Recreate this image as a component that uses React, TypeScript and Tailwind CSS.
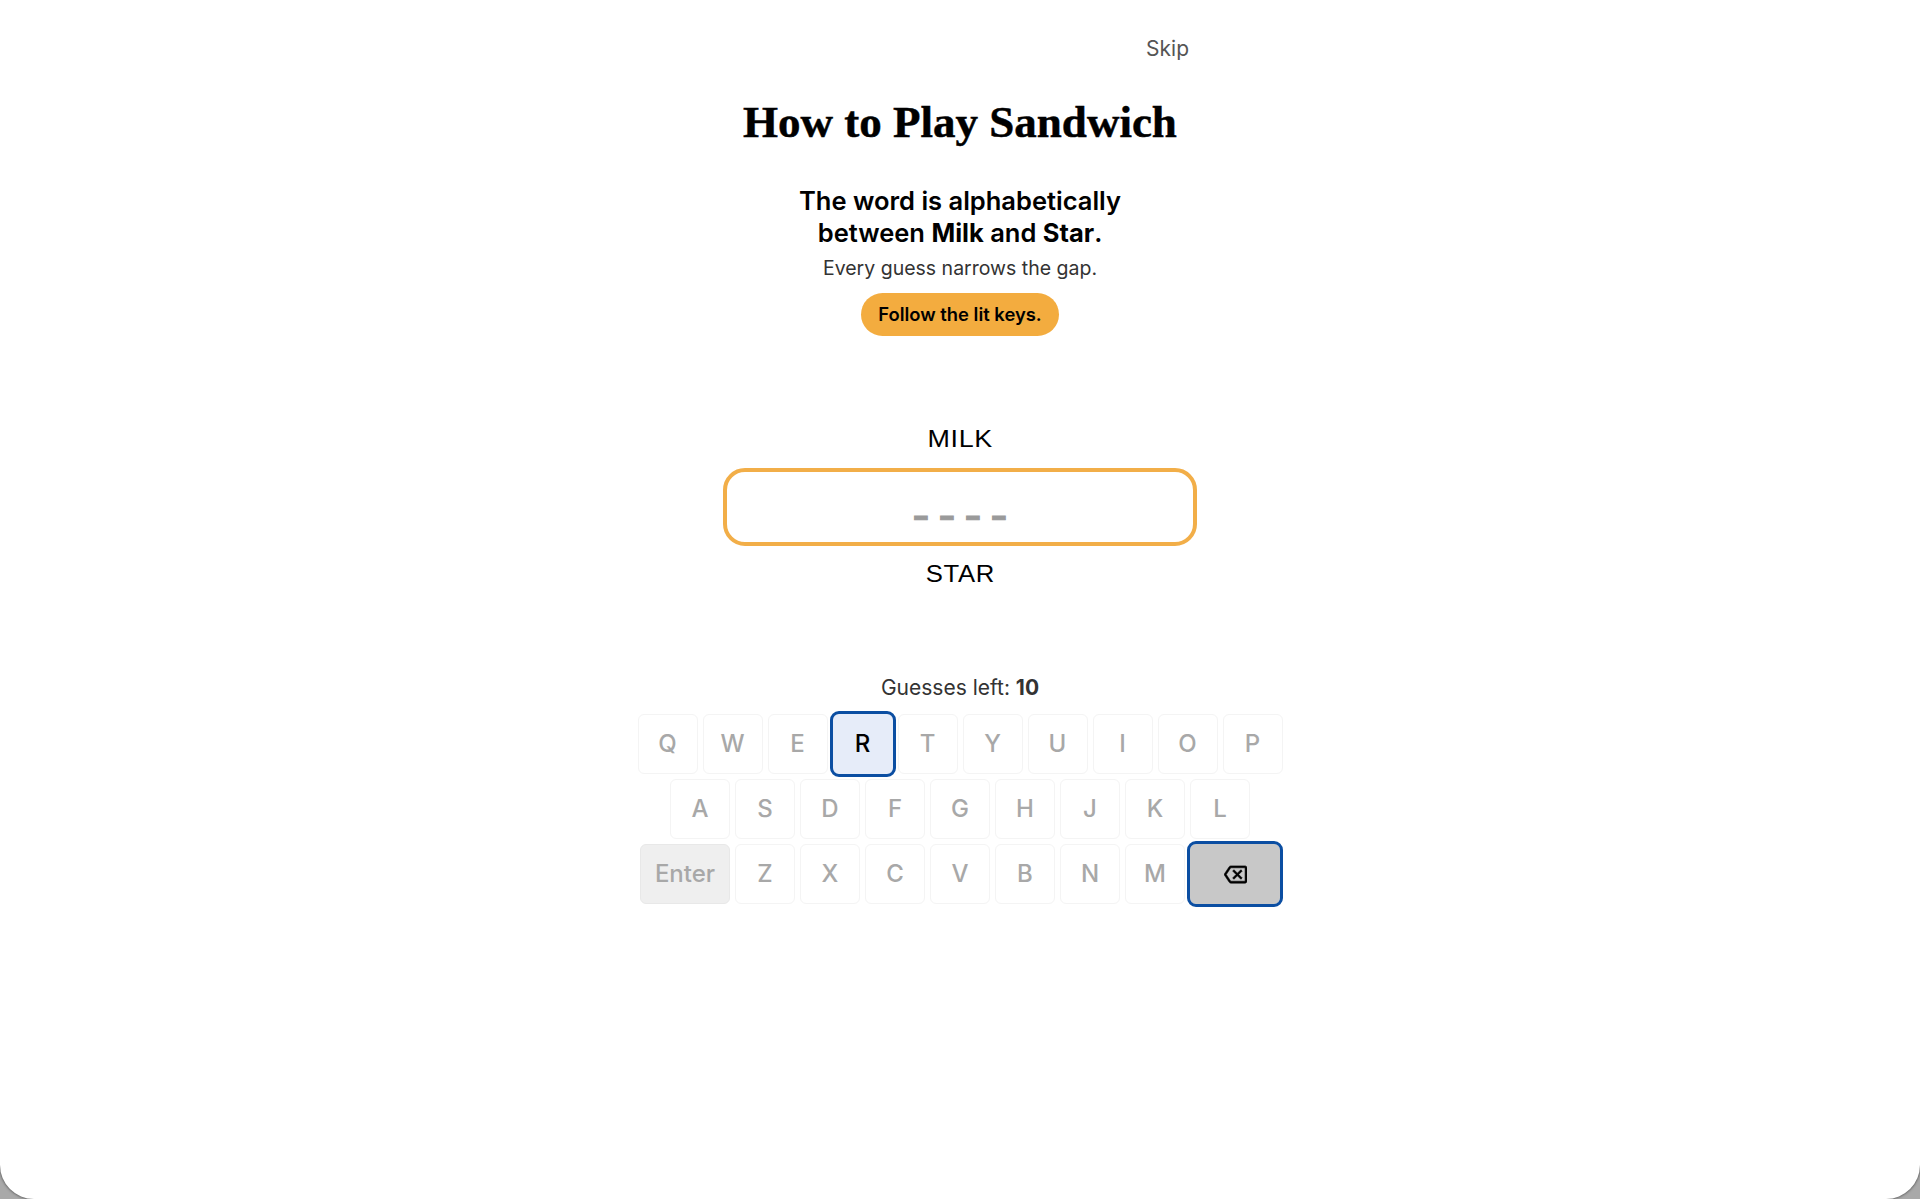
const Key = ({ label, active, wide, dark, children }: { label?: string; active?: boolean; wide?: boolean; dark?: boolean; children?: React.ReactNode }) => {
  const size = wide ? "w-[90px]" : "w-[60px]";
  const tone = dark
    ? "bg-[#c8c8c8] outline-[3px] outline-[#0b4ea2] border-transparent"
    : active
    ? "bg-[#e6ecf9] text-black font-medium outline-[3px] outline-[#0b4ea2] border-transparent"
    : wide
    ? "bg-[#efefef] border-[#e8e8e8] text-[#a8a8a8] font-medium"
    : "bg-white border-[#f4f4f4] text-[#a8a8a8] font-medium";
  return (
    <div className={`${size} h-[60px] rounded-[6px] border flex items-center justify-center text-[24px] ${tone}`}>
      {label}
      {children}
    </div>
  );
};

const rows = ["QWERTYUIOP", "ASDFGHJKL", "ZXCVBNM"];

export default function App() {
  return (
    <div className="w-full h-[1199px] bg-[#a9a9a9] overflow-hidden font-['Inter',sans-serif]">
      <div className="h-[1199px] bg-white rounded-b-[34px] shadow-[0_0_3px_#333333] flex flex-col items-center">
        <div className="w-[480px] flex justify-end pr-[11px] pt-[36px] h-[98px]">
          <span className="text-[21px] leading-[26px] text-[#555555]">Skip</span>
        </div>
        <h1 className="font-['Liberation_Serif',serif] font-bold text-[45px] leading-[48px] text-black [-webkit-text-stroke:0.5px_#000000]">How to Play Sandwich</h1>
        <div className="mt-[39px] text-center text-[25.5px] leading-[32px] font-semibold text-black">
          <p>The word is alphabetically</p>
          <p>between <b className="font-bold">Milk</b> and <b className="font-bold">Star</b>.</p>
        </div>
        <p className="mt-[5px] text-[19.5px] leading-[28px] text-[#333333]">Every guess narrows the gap.</p>
        <div className="mt-[11px] w-[198px] h-[43px] rounded-full bg-[#f3ac3f] flex items-center justify-center text-[18.4px] font-semibold text-black">
          Follow the lit keys.
        </div>
        <p className="mt-[88px] text-[24px] leading-[30px] font-normal text-black font-['Liberation_Sans',sans-serif] tracking-[0.6px] scale-x-[1.12]">MILK</p>
        <div className="mt-[14px] w-[474px] h-[78px] rounded-[22px] border-[4px] border-[#f2ae48] flex items-end justify-center pb-[20px]">
          <span className="text-[#9a9a9a] text-[26px] leading-[30px] font-black tracking-[4px] pl-[4px] [-webkit-text-stroke:1px_#9a9a9a]">_ _ _ _</span>
        </div>
        <p className="mt-[13px] text-[24px] leading-[30px] font-normal text-black font-['Liberation_Sans',sans-serif] tracking-[0.6px] scale-x-[1.07]">STAR</p>
        <p className="mt-[85px] text-[21px] leading-[28px] text-[#333333]">
          Guesses left: <b className="font-bold">10</b>
        </p>
        <div className="mt-[12px] flex flex-col gap-[5px]">
          <div className="flex gap-[5px] justify-center">
            {rows[0].split("").map((c) => (
              <Key key={c} label={c} active={c === "R"} />
            ))}
          </div>
          <div className="flex gap-[5px] justify-center">
            {rows[1].split("").map((c) => (
              <Key key={c} label={c} />
            ))}
          </div>
          <div className="flex gap-[5px] justify-center">
            <Key label="Enter" wide />
            {rows[2].split("").map((c) => (
              <Key key={c} label={c} />
            ))}
            <Key wide dark>
              <svg viewBox="0 0 24 24" className="w-[23px] h-[23px]" fill="#000000" stroke="#000000" strokeWidth="0.6">
                <path d="M22 3H7c-.69 0-1.23.35-1.59.88L0 12l5.41 8.11c.36.53.9.89 1.59.89h15c1.1 0 2-.9 2-2V5c0-1.1-.9-2-2-2zm0 16H7.07L2.4 12l4.66-7H22v14zm-11.59-2L14 13.41 17.59 17 19 15.59 15.41 12 19 8.41 17.59 7 14 10.59 10.41 7 9 8.41 12.59 12 9 15.59z" />
              </svg>
            </Key>
          </div>
        </div>
      </div>
    </div>
  );
}
